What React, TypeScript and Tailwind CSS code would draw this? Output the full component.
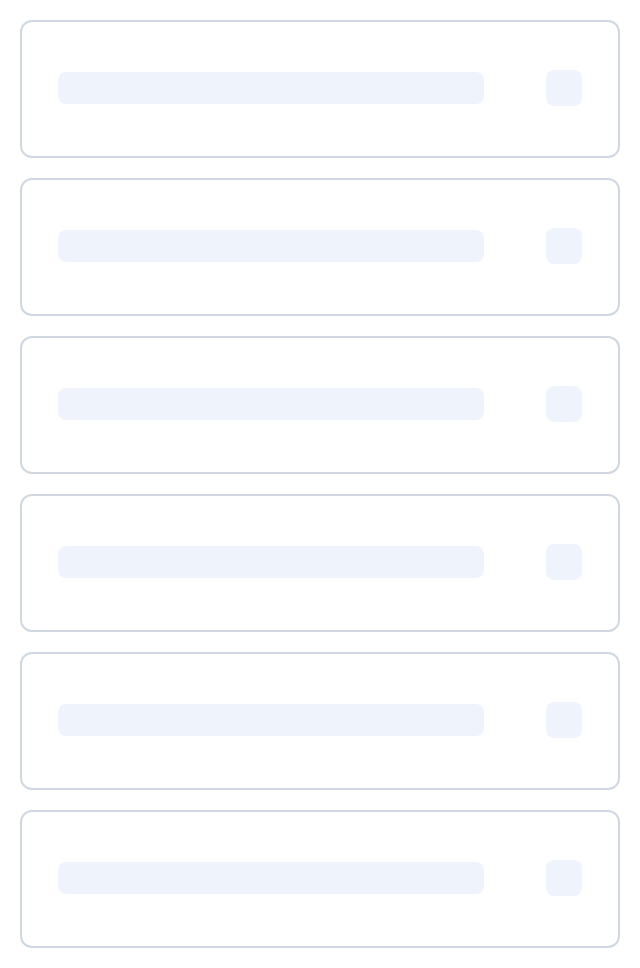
function SkeletonRow() {
  return (
    <div className="flex h-[138px] items-center gap-[62px] rounded-xl border-2 border-[#cfd8e1] bg-white px-9 pb-0.5">
      <div className="h-8 flex-1 rounded-lg bg-[#eff3fb]" />
      <div className="h-9 w-9 rounded-lg bg-[#eff3fb]" />
    </div>
  );
}

export default function App() {
  return (
    <div className="flex flex-col gap-5 bg-white p-5">
      {Array.from({ length: 6 }).map((_, i) => (
        <SkeletonRow key={i} />
      ))}
    </div>
  );
}
